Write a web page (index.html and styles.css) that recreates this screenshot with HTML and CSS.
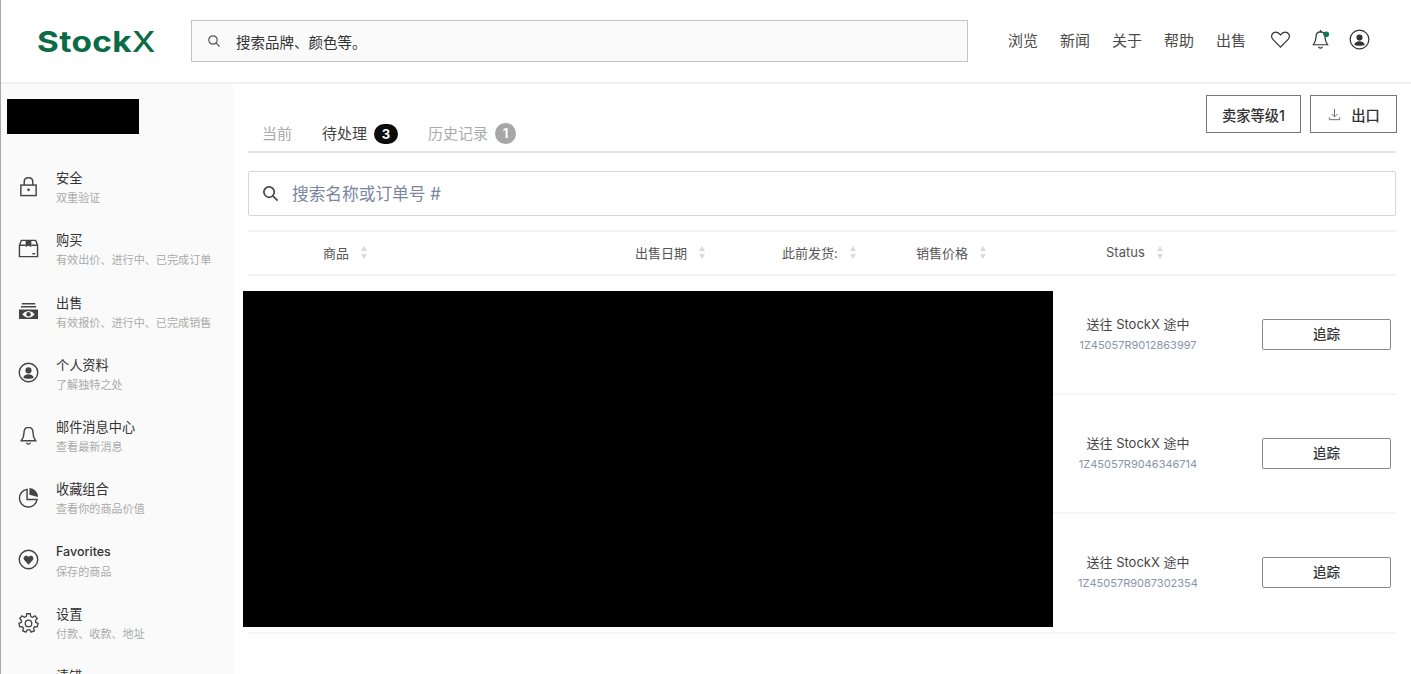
FILE: index.html
```html
<!DOCTYPE html>
<html lang="zh">
<head>
<meta charset="utf-8">
<title>StockX</title>
<link rel="stylesheet" href="styles.css">
</head>
<body>
<div class="app">
  <header class="topbar">
    <div class="logo-box"><a class="logo">Stock<span class="logo-x">X</span></a></div>
    <div class="topsearch">
      <svg class="ico-s" viewBox="0 0 16 16"><circle cx="7" cy="7" r="4.2"/><path d="M10.2 10.2 13.5 13.5"/></svg>
      <span>搜索品牌、颜色等。</span>
    </div>
    <nav class="topnav">
      <a>浏览</a><a>新闻</a><a>关于</a><a>帮助</a><a>出售</a>
      <svg class="nav-ico heart" viewBox="0 0 22 20"><path d="M11 18 3 9.800C.9 7.600 1.300 4.400 3.600 3 5.800 1.700 8.700 2.300 11 5.200 13.300 2.300 16.200 1.700 18.400 3 20.700 4.400 21.100 7.600 19 9.800Z"/></svg>
      <svg class="nav-ico bell" viewBox="0 0 22 22"><path d="M11 1V3M11 3C7.800 3 6.300 5.500 6.300 8.500 6.300 12 5.300 14 3.500 16.500H18.500C16.700 14 15.700 12 15.700 8.500 15.700 5.500 14.200 3 11 3Z"/><path d="M9 18.500C9.500 20.500 12.500 20.500 13 18.500"/><circle class="dot" cx="17" cy="5.500" r="3"/></svg>
      <svg class="nav-ico user" viewBox="0 0 22 22"><circle cx="11" cy="11" r="9.800"/><circle class="fill" cx="11" cy="9" r="3.200"/><path class="fill" d="M5.500 16.500C6.500 13.500 8.500 12.800 11 12.800S15.500 13.500 16.500 16.500C14.500 18 7.500 18 5.500 16.500Z"/></svg>
    </nav>
  </header>

  <div class="layout">
    <aside class="sidebar">
      <div class="redact-name"></div>
      <ul class="menu">
        <li class="item">
          <svg class="m-ico" viewBox="0 0 22 22"><rect x="3" y="9.500" width="16" height="11"/><path d="M6.500 9.500V6C6.500 .5 15.500 .5 15.500 6V9.500"/><circle class="fill" cx="11" cy="14.500" r="1.400"/></svg>
          <div class="m-text"><div class="m-title">安全</div><div class="m-sub">双重验证</div></div>
        </li>
        <li class="item">
          <svg class="m-ico" viewBox="0 0 22 22"><path d="M1.500 7.500 3.500 2.500H18.500L20.500 7.500V19.500H1.500Z"/><path d="M1.500 7.500H8M14 7.500H20.500"/><path class="fill" d="M8 2.500H14V9.500L11 8 8 9.500Z"/><path d="M15 16.500H18"/></svg>
          <div class="m-text"><div class="m-title">购买</div><div class="m-sub">有效出价、进行中、已完成订单</div></div>
        </li>
        <li class="item">
          <svg class="m-ico" viewBox="0 0 22 22"><path d="M4 4H18M3 7H19"/><path class="fill" fill-rule="evenodd" d="M1 10H21V20H1ZM11 11.500C7.500 11.500 5.500 14 4.500 15 5.500 16 7.500 18.500 11 18.500S16.500 16 17.500 15C16.500 14 14.500 11.500 11 11.500Z"/><circle class="fill" cx="11" cy="15" r="2.300"/></svg>
          <div class="m-text"><div class="m-title">出售</div><div class="m-sub">有效报价、进行中、已完成销售</div></div>
        </li>
        <li class="item">
          <svg class="m-ico" viewBox="0 0 22 22"><circle cx="11" cy="11" r="9.700"/><circle class="fill" cx="11" cy="8.800" r="3.200"/><path class="fill" d="M5.500 16.500C6.500 13.500 8.500 12.800 11 12.800S15.500 13.500 16.500 16.500C14.500 18 7.500 18 5.500 16.500Z"/></svg>
          <div class="m-text"><div class="m-title">个人资料</div><div class="m-sub">了解独特之处</div></div>
        </li>
        <li class="item">
          <svg class="m-ico" viewBox="0 0 22 22"><path d="M11 2.500C7.800 2.500 6.300 5 6.300 8 6.300 12 5.300 14 3.500 16.500H18.500C16.700 14 15.700 12 15.700 8 15.700 5 14.200 2.500 11 2.500Z"/><path d="M9 18.500C9.500 20.500 12.500 20.500 13 18.500"/></svg>
          <div class="m-text"><div class="m-title">邮件消息中心</div><div class="m-sub">查看最新消息</div></div>
        </li>
        <li class="item">
          <svg class="m-ico" viewBox="0 0 22 22"><path d="M9.500 2.500A9.300 9.300 0 1 0 20 13H9.500Z"/><path class="fill" d="M12 1A9.500 9.500 0 0 1 21 10.500L12 8Z"/></svg>
          <div class="m-text"><div class="m-title">收藏组合</div><div class="m-sub">查看你的商品价值</div></div>
        </li>
        <li class="item">
          <svg class="m-ico" viewBox="0 0 22 22"><circle cx="11" cy="11" r="9.700"/><path class="fill" d="M11 16.500 6.500 11.500C5 9.500 6.500 7 8.500 7 9.500 7 10.500 7.500 11 8.500 11.500 7.500 12.500 7 13.500 7 15.500 7 17 9.500 15.500 11.500Z"/></svg>
          <div class="m-text"><div class="m-title latin">Favorites</div><div class="m-sub">保存的商品</div></div>
        </li>
        <li class="item">
          <svg class="m-ico" viewBox="0 0 24 24"><path d="M10 2H14L14.600 5.200 16.700 6.100 19.400 4.300 22 7.500 19.900 9.800 20.300 11.900 23 13 22 17 19 16.800 17.700 18.600 18.700 21.500 15 23 13.500 20.500H10.500L9 23 5.300 21.500 6.300 18.600 5 16.800 2 17 1 13 3.700 11.900 4.100 9.800 2 7.500 4.600 4.300 7.300 6.100 9.400 5.200Z"/><circle cx="12" cy="13" r="3.700"/></svg>
          <div class="m-text"><div class="m-title">设置</div><div class="m-sub">付款、收款、地址</div></div>
        </li>
        <li class="item">
          <svg class="m-ico" viewBox="0 0 22 22"><path d="M2 3H8M2 8H20V20H2Z"/></svg>
          <div class="m-text"><div class="m-title">清错</div><div class="m-sub">退出</div></div>
        </li>
      </ul>
    </aside>

    <main class="main">
      <div class="actions">
        <button class="btn-top">卖家等级1</button>
        <button class="btn-top btn-export">
          <svg class="ico-dl" viewBox="0 0 16 16"><path d="M8 2V10M5 7.500 8 10.500 11 7.500M2.500 11V13.500H13.500V11"/></svg>
          出口
        </button>
      </div>
      <div class="tabs">
        <span class="tab muted">当前</span>
        <span class="tab active">待处理<i class="count dark">3</i></span>
        <span class="tab muted">历史记录<i class="count grey">1</i></span>
      </div>
      <div class="filter">
        <svg class="ico-f" viewBox="0 0 18 18"><circle cx="7.500" cy="7.500" r="5.500"/><path d="M11.500 11.500 16.500 16.500"/></svg>
        <span>搜索名称或订单号 #</span>
      </div>
      <div class="thead">
        <span></span>
        <span class="th">商品<i class="sort"></i></span>
        <span class="th">出售日期<i class="sort"></i></span>
        <span class="th">此前发货:<i class="sort"></i></span>
        <span class="th">销售价格<i class="sort"></i></span>
        <span class="th">Status<i class="sort"></i></span>
      </div>
      <div class="row">
        <div class="status"><div class="s-title">送往 StockX 途中</div><div class="s-code">1Z45057R9012863997</div></div>
        <button class="track">追踪</button>
      </div>
      <div class="row">
        <div class="status"><div class="s-title">送往 StockX 途中</div><div class="s-code">1Z45057R9046346714</div></div>
        <button class="track">追踪</button>
      </div>
      <div class="row">
        <div class="status"><div class="s-title">送往 StockX 途中</div><div class="s-code">1Z45057R9087302354</div></div>
        <button class="track">追踪</button>
      </div>
      <div class="redact-rows"></div>
    </main>
  </div>
</div>
</body>
</html>
```
FILE: styles.css
```css
* { box-sizing: border-box; }
html, body { margin: 0; height: 100%; overflow: hidden; background: #fff; }
body { font-family: "Inter", "Noto Sans CJK SC", sans-serif; color: #3a3a3a; font-size: 13px; }
ul { list-style: none; margin: 0; padding: 0; }
i { font-style: normal; }
svg { fill: none; stroke: currentColor; flex: none; }
svg .fill { fill: currentColor; stroke: none; }

.app { height: 674px; border-left: 1px solid #a9a9a9; display: flex; flex-direction: column; overflow: hidden; }

.topbar { height: 84px; flex: none; border-bottom: 2px solid #f0f0f0; display: flex; align-items: center; padding: 0 41px 0 36px; }
.logo-box { width: 154px; flex: none; }
.logo { display: inline-block; font-family: "Inter", sans-serif; font-weight: 700; font-size: 29px; letter-spacing: .3px; color: #0b6b47; line-height: 1; white-space: nowrap; transform: scaleX(1.15); transform-origin: left center; }
.logo-x { font-weight: 500; font-size: 29px; letter-spacing: 0; }
.topsearch { width: 777px; height: 42px; background: #fafafa; border: 1px solid #c4c4c4; display: flex; align-items: center; padding-left: 14px; gap: 14px; font-size: 14.500px; color: #333; }
.ico-s { width: 16px; height: 16px; stroke: #555; stroke-width: 1.200; }
.topnav { margin-left: auto; margin-bottom: 3px; display: flex; align-items: center; gap: 22px; font-size: 15px; color: #4a4a4a; }
.nav-ico { color: #333; stroke-width: 1.300; }
.heart { width: 21px; height: 19px; margin-left: 2px; }
.bell { width: 21px; height: 21px; margin-left: -3px; }
.bell .dot { fill: #0b7a50; stroke: none; }
.user { width: 21px; height: 21px; margin-left: -4px; }

.layout { flex: 1; display: flex; min-height: 0; }
.sidebar { width: 232px; flex: none; background: #fafafa; padding: 15px 0 0 6px; }
.redact-name { width: 132px; height: 35px; background: #000; }
.menu { margin-top: 35px; }
.item { height: 62.300px; display: flex; gap: 17px; padding-left: 11px; align-items: flex-start; }
.m-ico { width: 21px; height: 21px; margin-top: 6.500px; color: #444; stroke-width: 1.500; }
.m-title { font-size: 13.200px; line-height: 18px; color: #333; }
.latin { font-weight: 500; font-size: 12.500px; }
.m-sub { font-size: 11.100px; line-height: 20px; margin-top: 1px; color: #aaa; white-space: nowrap; }

.main { flex: 1; position: relative; padding: 11px 15px 0 15px; min-width: 0; }
.actions { position: absolute; top: 11px; right: 14px; display: flex; gap: 9px; }
.btn-top { height: 38px; background: #fff; border: 1px solid #777; font: 500 14.300px "Inter", "Noto Sans CJK SC", sans-serif; color: #333; padding: 0; width: 95px; display: flex; align-items: center; justify-content: center; gap: 9px; }
.btn-export { width: 87px; }
.ico-dl { width: 15px; height: 15px; stroke: #666; stroke-width: 1; }

.tabs { height: 58px; border-bottom: 2px solid #e4e4e4; display: flex; align-items: flex-end; gap: 30px; padding: 0 0 7px 14px; font-size: 15px; }
.tab { display: flex; align-items: center; gap: 7px; line-height: 21px; }
.muted { color: #aaa; }
.active { color: #444; }
.count { width: 24px; height: 20px; border-radius: 10px; font: 700 13px/20px "Inter", sans-serif; color: #fff; text-align: center; display: block; }
.dark { background: #0c0c0c; }
.grey { background: #a5a8a6; width: 21px; border-radius: 50%; height: 21px; line-height: 21px; }

.filter { margin-top: 18px; height: 45px; border: 1px solid #d6d6d6; border-radius: 2px; display: flex; align-items: center; gap: 13px; padding: 0 0 2px 13px; font-size: 16.700px; color: #7a86a0; }
.ico-f { width: 17px; height: 17px; stroke: #444; stroke-width: 1.800; margin-top: 2px; }

.thead { margin-top: 14px; height: 46px; border-top: 2px solid #f2f2f2; border-bottom: 2px solid #f2f2f2; padding-bottom: 2px; display: grid; grid-template-columns: 75px 312px 147px 134px 190px 1fr; align-items: center; font-size: 13px; color: #555; }
.th { display: flex; align-items: center; gap: 12px; }
.sort { width: 6px; height: 13px; display: flex; flex-direction: column; justify-content: space-between; }
.sort::before, .sort::after { content: ""; border-left: 3px solid transparent; border-right: 3px solid transparent; }
.sort::before { border-bottom: 5px solid #dadada; }
.sort::after { border-top: 5px solid #dadada; }

.row { height: 119.200px; border-bottom: 2px solid #f5f5f5; display: flex; align-items: center; justify-content: flex-end; padding-right: 5px; }
.status { width: 130px; margin-right: 59px; text-align: center; white-space: nowrap; display: flex; flex-direction: column; align-items: center; }
.s-title { font-size: 13px; line-height: 20px; color: #444; }
.s-code { font-size: 11px; line-height: 20px; margin-top: 1px; color: #8a94ac; }
.track { width: 129px; height: 31px; background: #fff; border: 1px solid #8a8a8a; border-radius: 2px; font: 500 13.500px "Noto Sans CJK SC", sans-serif; color: #333; padding: 0 0 3px; }

.redact-rows { position: absolute; left: 10px; top: 207px; width: 810px; height: 336px; background: #000; }
```
